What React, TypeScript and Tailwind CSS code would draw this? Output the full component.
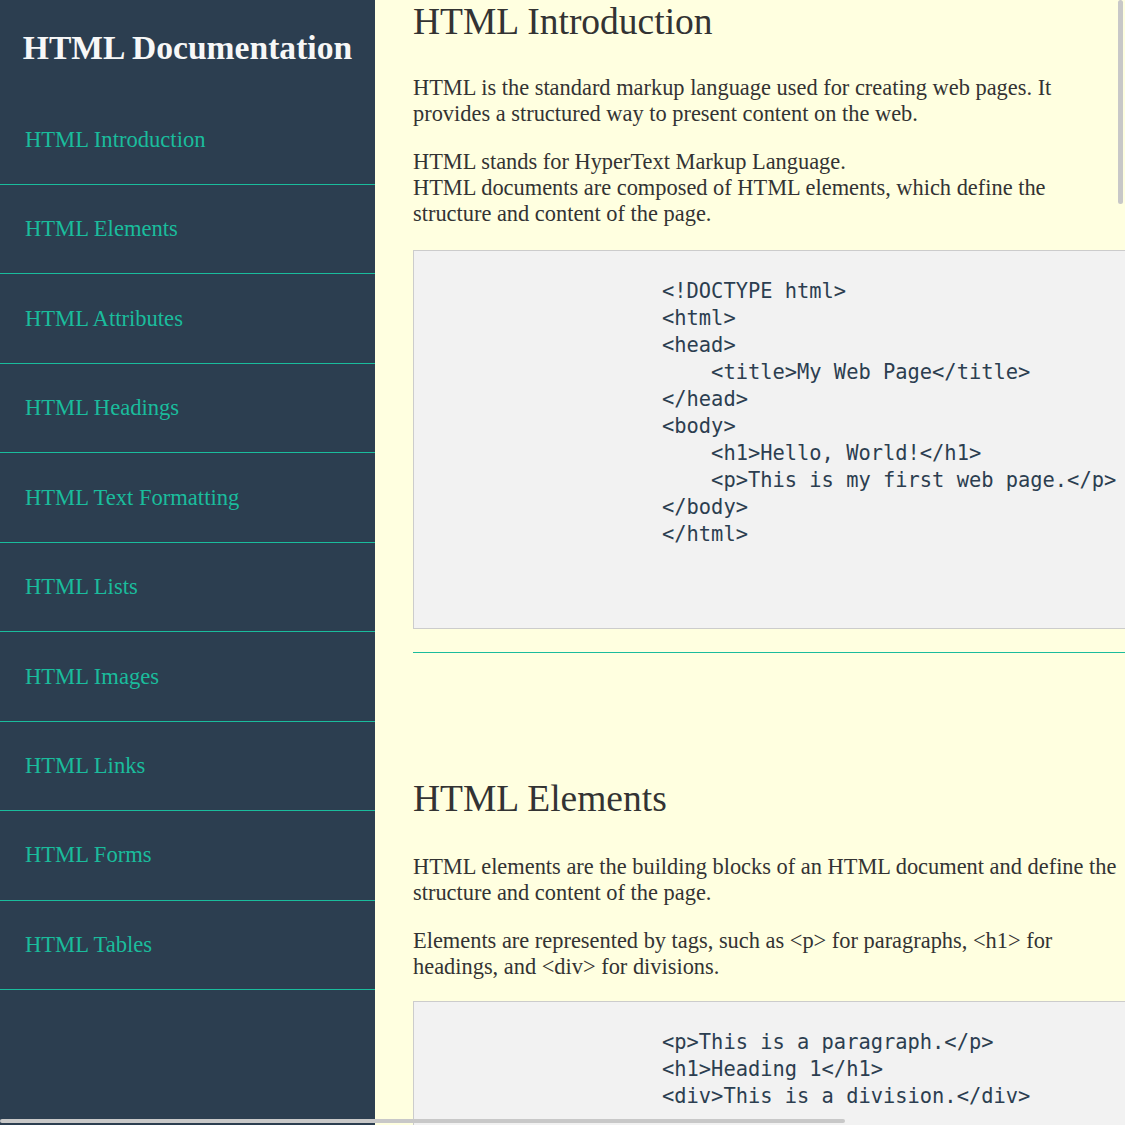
import React from "react";

const navItems = [
  "HTML Introduction",
  "HTML Elements",
  "HTML Attributes",
  "HTML Headings",
  "HTML Text Formatting",
  "HTML Lists",
  "HTML Images",
  "HTML Links",
  "HTML Forms",
  "HTML Tables",
];

const code1 = `<!DOCTYPE html>
<html>
<head>
    <title>My Web Page</title>
</head>
<body>
    <h1>Hello, World!</h1>
    <p>This is my first web page.</p>
</body>
</html>`;

const code2 = `<p>This is a paragraph.</p>
<h1>Heading 1</h1>
<div>This is a division.</div>`;

function CodeBox({ code, top }: { code: string; top: boolean }) {
  return (
    <pre
      className={
        (top ? "mt-[22.4px] " : "mt-[20.4px] ") +
        "w-[800px] border border-[#cccccc] bg-[#f2f2f2] pt-[27.5px] pb-[80px] pl-[248px] font-['DejaVu_Sans_Mono','Liberation_Mono',monospace] text-[20.4px] leading-[27px] text-[#2c3e50]"
      }
    >
      {code}
    </pre>
  );
}

export default function App() {
  return (
    <div className="relative flex h-[1125px] w-[1125px] overflow-hidden font-['Liberation_Serif','Times_New_Roman',serif]">
      <aside className="w-[375px] shrink-0 bg-[#2c3e50]">
        <h1 className="pt-[28px] pb-[28.5px] text-center text-[33.6px] font-bold leading-[39px] text-[#f7f7f7]">
          HTML Documentation
        </h1>
        <nav>
          {navItems.map((item) => (
            <a
              key={item}
              href="#"
              className="block border-b border-[#1abc9c] px-[25px] py-[31.36px] text-[22.6px] leading-[25.74px] text-[#1abc9c]"
            >
              {item}
            </a>
          ))}
        </nav>
      </aside>
      <main className="min-w-0 flex-1 overflow-hidden bg-[#ffffe0] pl-[38px] text-[#333333]">
        <div className="w-[712px]">
          <section>
            <h2 className="text-[37.5px] font-normal leading-[43px]">HTML Introduction</h2>
            <p className="mt-[32px] text-[22.4px] leading-[26px]">
              HTML is the standard markup language used for creating web pages. It provides a structured way to present content on the web.
            </p>
            <p className="mt-[22.4px] text-[22.4px] leading-[26px]">
              HTML stands for HyperText Markup Language.
              <br />
              HTML documents are composed of HTML elements, which define the structure and content of the page.
            </p>
            <CodeBox code={code1} top={true} />
          </section>
          <div className="mt-[23px] h-0 w-[800px] border-t border-[#1abc9c]" />
          <section className="pt-[124px]">
            <h2 className="text-[37.5px] font-normal leading-[43px]">HTML Elements</h2>
            <p className="mt-[33.5px] text-[22.4px] leading-[26px]">
              HTML elements are the building blocks of an HTML document and define the structure and content of the page.
            </p>
            <p className="mt-[22.4px] text-[22.4px] leading-[26px]">
              Elements are represented by tags, such as &lt;p&gt; for paragraphs, &lt;h1&gt; for headings, and &lt;div&gt; for divisions.
            </p>
            <CodeBox code={code2} top={false} />
          </section>
        </div>
      </main>
      <div className="absolute right-[2px] top-0 h-[204px] w-[5px] rounded-full bg-[#c8c8c8]" />
      <div className="absolute bottom-[2px] left-0 h-[4px] w-[845px] rounded-full bg-[#c8c8c8]" />
    </div>
  );
}
